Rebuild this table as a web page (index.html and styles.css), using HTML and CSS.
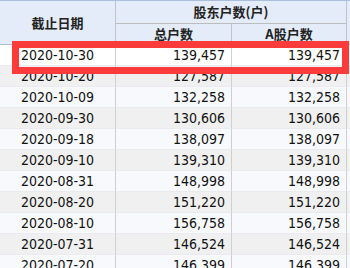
FILE: index.html
```html
<!DOCTYPE html>
<html lang="zh">
<head>
<meta charset="utf-8">
<link rel="stylesheet" href="styles.css">
</head>
<body>
<div class="wrap">
  <table class="grid">
    <colgroup>
      <col class="c-date"><col class="c-num"><col class="c-num2"><col class="c-fill">
    </colgroup>
    <thead>
      <tr class="h1">
        <th rowspan="2" class="hd-date">截止日期</th>
        <th colspan="2" class="hd-group">股东户数(户)</th>
        <th rowspan="2" class="hd-fill"></th>
      </tr>
      <tr class="h2">
        <th class="hd-sub">总户数</th>
        <th class="hd-sub">A股户数</th>
      </tr>
    </thead>
    <tbody>
      <tr class="hl"><td class="d">2020-10-30</td><td class="n">139,457</td><td class="n">139,457</td><td class="f"></td></tr>
      <tr><td class="d">2020-10-20</td><td class="n">127,587</td><td class="n">127,587</td><td class="f"></td></tr>
      <tr><td class="d">2020-10-09</td><td class="n">132,258</td><td class="n">132,258</td><td class="f"></td></tr>
      <tr><td class="d">2020-09-30</td><td class="n">130,606</td><td class="n">130,606</td><td class="f"></td></tr>
      <tr><td class="d">2020-09-18</td><td class="n">138,097</td><td class="n">138,097</td><td class="f"></td></tr>
      <tr><td class="d">2020-09-10</td><td class="n">139,310</td><td class="n">139,310</td><td class="f"></td></tr>
      <tr><td class="d">2020-08-31</td><td class="n">148,998</td><td class="n">148,998</td><td class="f"></td></tr>
      <tr><td class="d">2020-08-20</td><td class="n">151,220</td><td class="n">151,220</td><td class="f"></td></tr>
      <tr><td class="d">2020-08-10</td><td class="n">156,758</td><td class="n">156,758</td><td class="f"></td></tr>
      <tr><td class="d">2020-07-31</td><td class="n">146,524</td><td class="n">146,524</td><td class="f"></td></tr>
      <tr><td class="d">2020-07-20</td><td class="n">146,399</td><td class="n">146,399</td><td class="f"></td></tr>
    </tbody>
  </table>
  <div class="mark"></div>
</div>
</body>
</html>
```
FILE: styles.css
```css
html, body {
  margin: 0;
  padding: 0;
  background: #ffffff;
  overflow: hidden;
}
.wrap {
  position: relative;
  width: 350px;
  height: 268px;
  overflow: hidden;
}
.grid {
  border-collapse: separate;
  border-spacing: 0;
  table-layout: fixed;
  width: 350px;
  border-top: 1px solid #a9bedb;
  font-family: "DejaVu Sans Condensed", "DejaVu Sans", sans-serif;
  font-size: 14px;
  color: #111;
}
.c-date { width: 116px; }
.c-num { width: 116px; }
.c-num2 { width: 115px; }
.c-fill { width: 3px; }

th {
  background: #e3ecf8;
  font-family: "Noto Sans CJK SC", sans-serif;
  font-size: 13px;
  font-weight: bold;
  color: #222;
  padding: 0;
  text-align: center;
  border-right: 1px solid #bfc3c9;
  border-bottom: 1px solid #a9bedb;
}
.h1 th { height: 22px; line-height: 22px; }
.hd-group { border-bottom: 1px solid #bdbdbd; }
.h2 th { height: 20px; line-height: 20px; }
.hd-fill { border-right: none; }

td {
  height: 20px;
  line-height: 20px;
  padding: 0;
  border-right: 1px solid #cfcfcf;
  border-bottom: 1px solid #e9ebef;
  white-space: nowrap;
  overflow: hidden;
}
tbody tr:nth-child(odd) td { background: #f8f9fc; }
tbody tr:nth-child(even) td { background: #f0f0f0; }
tbody tr.hl td { background: #ffffff; }
td.d { text-align: center; }
td.n { text-align: right; padding-right: 6px; }
td.f { border-right: none; }

.mark {
  position: absolute;
  left: 12px;
  top: 41px;
  width: 323px;
  height: 19px;
  border: 7px solid #fd3b3b;
}
```
